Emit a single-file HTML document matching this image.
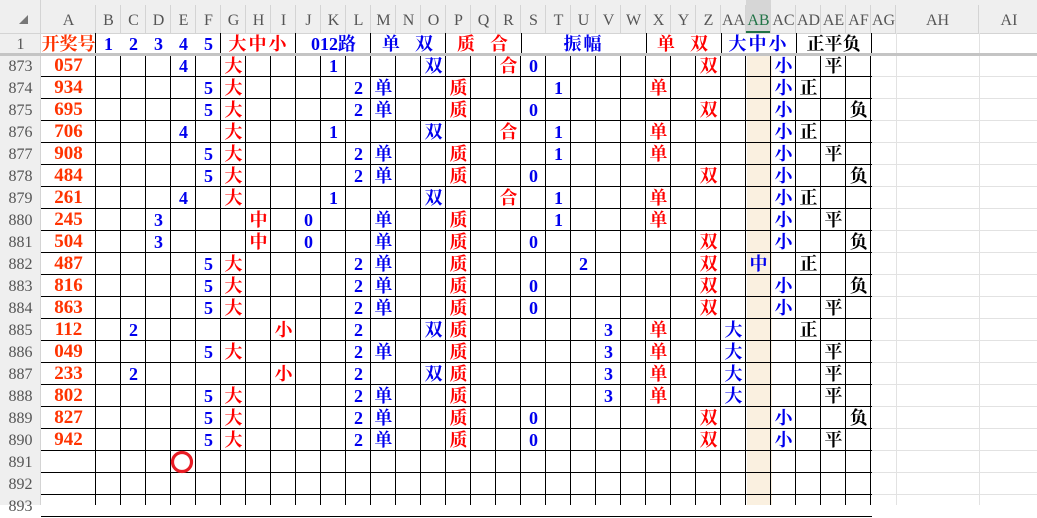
<!DOCTYPE html>
<html><head><meta charset="utf-8">
<style>
body{margin:0;width:1037px;height:505px;overflow:hidden;background:#fff;position:relative;font-family:"Liberation Serif","Noto Serif CJK SC",serif}
.a{position:absolute}
.t{position:absolute;text-align:center;white-space:nowrap;line-height:22px;height:22px}
.ch{position:absolute;top:0;height:33px;line-height:42px;text-align:center;color:#555;font-size:16px;font-family:"Liberation Serif",serif}
</style></head><body>
<div class="a" style="left:0;top:0;width:1037px;height:33px;background:#efefef"></div>
<div class="a" style="left:0;top:0;width:41px;height:505px;background:#efefef"></div>
<div class="a" style="left:0;top:33px;width:1037px;height:1px;background:#d4d4d4"></div>
<div class="a" style="left:40px;top:0;width:1px;height:505px;background:#d4d4d4"></div>
<svg class="a" style="left:18px;top:14px" width="10" height="10"><polygon points="10,1 10,10 1,10" fill="#777"/></svg>
<div id="g"></div>
<svg class="a" style="left:0;top:0" width="1037" height="505"><circle cx="182" cy="462" r="9.5" fill="none" stroke="#e81c24" stroke-width="3.2"/></svg>
<script>
var names=["A"],xs=[41],ws=[55];
var L="BCDEFGHIJKLMNOPQRSTUVWXYZ".split("").concat(["AA","AB","AC","AD","AE","AF","AG"]);
var x=96;for(var i=0;i<L.length;i++){names.push(L[i]);xs.push(x);ws.push(25);x+=25;}
names.push("AH");xs.push(x);ws.push(83);x+=83;names.push("AI");xs.push(x);ws.push(60);
var h="";
function col(n){return names.indexOf(n);}
for(var i=0;i<names.length;i++){
 var bg=names[i]=="AB"?"background:#d6d6d6;color:#217346;border-bottom:2px solid #217346;height:31px;":"";
 h+='<div class="ch" style="left:'+xs[i]+'px;width:'+ws[i]+'px;'+bg+'">'+names[i]+'</div>';
 h+='<div class="a" style="left:'+(xs[i]+ws[i]-1)+'px;top:5px;width:1px;height:28px;background:#d4d4d4"></div>';
}
h+='<div class="a" style="left:747px;top:55px;width:25px;height:450px;background:#faf0e0"></div>';
for(var y=55+21;y<505;y+=22)h+='<div class="a" style="left:872px;top:'+y+'px;width:165px;height:1px;background:#e2e2e2"></div>';
[896,979].forEach(function(v){h+='<div class="a" style="left:'+v+'px;top:33px;width:1px;height:472px;background:#e2e2e2"></div>';});
h+='<div class="t" style="left:0;top:34px;width:41px;color:#555;font-size:16px">1</div>';
for(var r=0;r<21;r++){h+='<div class="t" style="left:0;top:'+(56+22*r)+'px;width:41px;color:#555;font-size:16px">'+(873+r)+'</div>';}
for(var r=0;r<21;r++){h+='<div class="a" style="left:41px;top:'+(76+22*r)+'px;width:831px;height:1px;background:#000"></div>';}
for(var i=1;i<=32;i++){h+='<div class="a" style="left:'+(xs[i]-1)+'px;top:55px;width:1px;height:450px;background:#000"></div>';}
[96,221,296,371,446,522,647,722,797,872].forEach(function(v){h+='<div class="a" style="left:'+(v-1)+'px;top:33px;width:1px;height:22px;background:#000"></div>';});
h+='<div class="a" style="left:0;top:53px;width:1037px;height:3px;background:#c4c4c4"></div>';
var R="#ff0000",B="#0000ee",K="#000",O="#ff3300";
function span(a,b,txt,c,ls,bold){var s=col(a),e=col(b);h+='<div class="t" style="left:'+xs[s]+'px;top:33px;width:'+(xs[e]+ws[e]-xs[s])+'px;color:'+c+';font-size:18px;letter-spacing:'+(ls||0)+'px;font-weight:bold">'+txt+'</div>';}
span("A","A","开奖号",O,0);
for(var k=1;k<=5;k++)span(names[k],names[k],""+k,B,0,1);
span("G","I","大中小",R,2);span("J","L","012路",B,0,1);span("M","O","单&nbsp;&nbsp;双",B,2);
span("P","R","质&nbsp;&nbsp;合",R,2);span("S","W","振幅",B,2);span("X","Z","单&nbsp;&nbsp;双",R,2);
span("AA","AC","大中小",B,2);span("AD","AF","正平负",K,0);
var data=[
["057","E4 G大 K1 O双 R合 S0 Z双 AC小 AE平"],
["934","F5 G大 L2 M单 P质 T1 X单 AC小 AD正"],
["695","F5 G大 L2 M单 P质 S0 Z双 AC小 AF负"],
["706","E4 G大 K1 O双 R合 T1 X单 AC小 AD正"],
["908","F5 G大 L2 M单 P质 T1 X单 AC小 AE平"],
["484","F5 G大 L2 M单 P质 S0 Z双 AC小 AF负"],
["261","E4 G大 K1 O双 R合 T1 X单 AC小 AD正"],
["245","D3 H中 J0 M单 P质 T1 X单 AC小 AE平"],
["504","D3 H中 J0 M单 P质 S0 Z双 AC小 AF负"],
["487","F5 G大 L2 M单 P质 U2 Z双 AB中 AD正"],
["816","F5 G大 L2 M单 P质 S0 Z双 AC小 AF负"],
["863","F5 G大 L2 M单 P质 S0 Z双 AC小 AE平"],
["112","C2 I小 L2 O双 P质 V3 X单 AA大 AD正"],
["049","F5 G大 L2 M单 P质 V3 X单 AA大 AE平"],
["233","C2 I小 L2 O双 P质 V3 X单 AA大 AE平"],
["802","F5 G大 L2 M单 P质 V3 X单 AA大 AE平"],
["827","F5 G大 L2 M单 P质 S0 Z双 AC小 AF负"],
["942","F5 G大 L2 M单 P质 S0 Z双 AC小 AE平"]];
var redCols={G:1,H:1,I:1,P:1,Q:1,R:1,X:1,Y:1,Z:1};
for(var r=0;r<data.length;r++){
 var y=55+22*r;
 h+='<div class="t" style="left:41px;top:'+y+'px;width:55px;color:'+O+';font-size:19px;font-weight:bold">'+data[r][0]+'</div>';
 data[r][1].split(" ").forEach(function(it){
  var m=it.match(/^([A-Z]+)(.)$/);var c=col(m[1]);
  var color=redCols[m[1]]?R:(["AD","AE","AF"].indexOf(m[1])>=0?K:B);
  var num=/[0-9]/.test(m[2]);
  h+='<div class="t" style="left:'+xs[c]+'px;top:'+y+'px;width:25px;color:'+color+';font-size:18px;font-weight:bold">'+m[2]+'</div>';
 });
}
document.getElementById("g").innerHTML=h;
</script>
</body></html>
